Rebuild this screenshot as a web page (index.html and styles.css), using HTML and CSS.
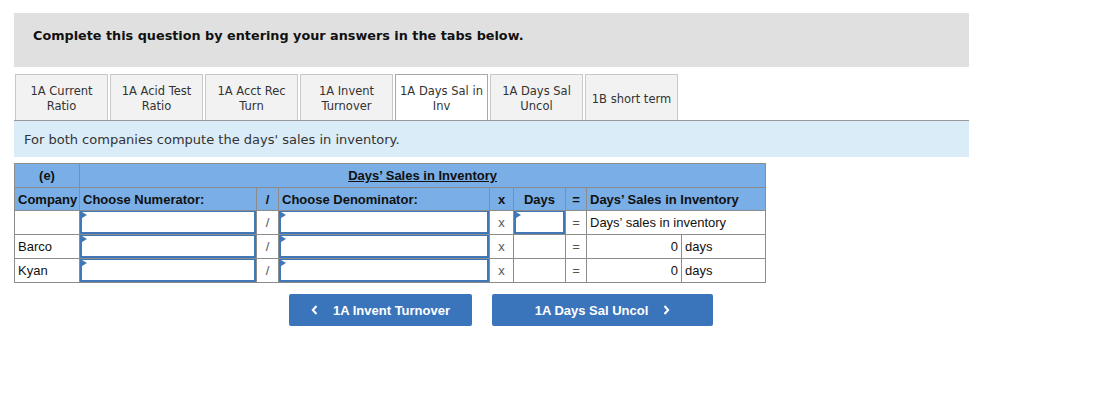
FILE: index.html
```html
<!DOCTYPE html>
<html>
<head>
<meta charset="utf-8">
<link rel="stylesheet" href="styles.css">
</head>
<body>
<div class="page">
  <div class="banner">Complete this question by entering your answers in the tabs below.</div>
  <div class="tabs">
    <div class="tab">1A Current<br>Ratio</div>
    <div class="tab">1A Acid Test<br>Ratio</div>
    <div class="tab">1A Acct Rec<br>Turn</div>
    <div class="tab">1A Invent<br>Turnover</div>
    <div class="tab active">1A Days Sal in<br>Inv</div>
    <div class="tab">1A Days Sal<br>Uncol</div>
    <div class="tab">1B short term</div>
  </div>
  <div class="info">For both companies compute the days' sales in inventory.</div>
  <table class="grid">
    <colgroup>
      <col style="width:65px"><col style="width:177px"><col style="width:22px"><col style="width:211px"><col style="width:24px"><col style="width:52px"><col style="width:21px"><col style="width:95px"><col style="width:84px">
    </colgroup>
    <tr class="h1">
      <td class="c">(e)</td>
      <td colspan="8" class="c"><span class="ul">Days’ Sales in Inventory</span></td>
    </tr>
    <tr class="h2">
      <td>Company</td>
      <td>Choose Numerator:</td>
      <td class="c">/</td>
      <td>Choose Denominator:</td>
      <td class="c">x</td>
      <td class="c">Days</td>
      <td class="c">=</td>
      <td colspan="2">Days’ Sales in Inventory</td>
    </tr>
    <tr>
      <td></td>
      <td class="in"><span class="flag"></span><input class="box" type="text"></td>
      <td class="c op">/</td>
      <td class="in"><span class="flag"></span><input class="box" type="text"></td>
      <td class="c op">x</td>
      <td class="in"><span class="flag"></span><input class="box" type="text"></td>
      <td class="c op">=</td>
      <td colspan="2">Days’ sales in inventory</td>
    </tr>
    <tr>
      <td>Barco</td>
      <td class="in"><span class="flag"></span><input class="box" type="text"></td>
      <td class="c op">/</td>
      <td class="in"><span class="flag"></span><input class="box" type="text"></td>
      <td class="c op">x</td>
      <td></td>
      <td class="c op">=</td>
      <td class="r">0</td>
      <td>days</td>
    </tr>
    <tr>
      <td>Kyan</td>
      <td class="in"><span class="flag"></span><input class="box" type="text"></td>
      <td class="c op">/</td>
      <td class="in"><span class="flag"></span><input class="box" type="text"></td>
      <td class="c op">x</td>
      <td></td>
      <td class="c op">=</td>
      <td class="r">0</td>
      <td>days</td>
    </tr>
  </table>
  <div class="nav">
    <button class="btn prev"><svg class="chev" width="7" height="10" viewBox="0 0 7 10"><path d="M5.5 1 L1.8 5 L5.5 9" fill="none" stroke="#fff" stroke-width="2"/></svg>1A Invent Turnover</button>
    <button class="btn next">1A Days Sal Uncol<svg class="chev" width="7" height="10" viewBox="0 0 7 10"><path d="M1.5 1 L5.2 5 L1.5 9" fill="none" stroke="#fff" stroke-width="2"/></svg></button>
  </div>
</div>
</body>
</html>
```
FILE: styles.css
```css
html, body {
  margin: 0;
  padding: 0;
  background: #fff;
}
.page {
  padding: 13px 0 0 14px;
  width: 955px;
  font-family: "DejaVu Sans", Verdana, sans-serif;
  color: #222;
}
.banner {
  background: #e0e0e0;
  height: 54px;
  box-sizing: border-box;
  padding: 0 0 10px 19px;
  display: flex;
  align-items: center;
  font-weight: bold;
  font-size: 12.8px;
  color: #111;
}
.tabs {
  display: flex;
  margin-top: 7px;
  padding-left: 1px;
  border-bottom: 1px solid #999;
  height: 47px;
  box-sizing: border-box;
}
.tab {
  width: 93px;
  margin-right: 2px;
  box-sizing: border-box;
  background: #f2f2f2;
  border: 1px solid #c8c8c8;
  border-bottom: none;
  display: flex;
  align-items: center;
  justify-content: center;
  text-align: center;
  font-size: 11.5px;
  line-height: 15px;
  color: #333;
  padding-top: 3px;
}
.tab.active {
  background: #fff;
  border-color: #a8a8a8;
}
.info {
  background: #dbecf9;
  height: 36px;
  display: flex;
  align-items: center;
  padding-left: 10px;
  padding-top: 1px;
  box-sizing: border-box;
  font-size: 13px;
  color: #333;
}
.grid {
  margin-top: 6px;
  border-collapse: collapse;
  table-layout: fixed;
  width: 751px;
  font-family: "Liberation Sans", Arial, sans-serif;
  font-size: 13px;
  color: #111;
}
.grid td {
  border: 1px solid #8c8c8c;
  height: 23px;
  padding: 0 3px;
  box-sizing: border-box;
  white-space: nowrap;
  overflow: hidden;
}
.grid tr.h1 td, .grid tr.h2 td {
  background: #79aee6;
  font-weight: bold;
}
.grid tr.h1 td {
  height: 24px;
}
.ul {
  text-decoration: underline;
}
.grid td.c { text-align: center; padding: 0; }
.grid td.r { text-align: right; }
.grid td.op { color: #555; }
.grid td.in {
  padding: 0;
  position: relative;
}
.box {
  display: block;
  width: 100%;
  height: 23px;
  box-sizing: border-box;
  border: 2px solid #3f77b7;
  border-top-width: 1px;
  margin: 0;
  padding: 0;
  background: #fff;
  outline: none;
}
.flag {
  position: absolute;
  left: 2px;
  top: 1px;
  width: 0;
  height: 0;
  border-top: 3px solid transparent;
  border-bottom: 3px solid transparent;
  border-left: 5px solid #3f77b7;
}
.nav {
  display: flex;
  margin-top: 11px;
  padding-left: 275px;
  gap: 20px;
}
.btn {
  height: 32px;
  border: none;
  border-radius: 2px;
  background: #3a75bb;
  color: #fff;
  font-family: "Liberation Sans", Arial, sans-serif;
  font-weight: bold;
  font-size: 13px;
  display: flex;
  align-items: center;
  justify-content: center;
  padding: 0;
}
.btn.prev { width: 183px; }
.btn.next { width: 221px; }
.chev { display: block; }
.prev .chev { margin-right: 15px; }
.next .chev { margin-left: 15px; }
```
